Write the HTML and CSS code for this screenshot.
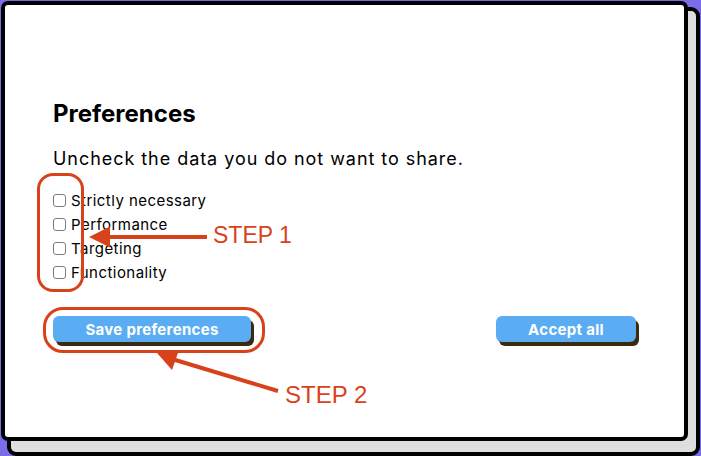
FILE: index.html
```html
<!DOCTYPE html>
<html>
<head>
<meta charset="utf-8">
<link rel="stylesheet" href="styles.css">
</head>
<body>
<div class="backdrop"></div>
<div class="card">
  <h1 class="title">Preferences</h1>
  <p class="lead">Uncheck the data you do not want to share.</p>
  <div class="options">
    <label class="option"><input type="checkbox" class="box"><span>Strictly necessary</span></label>
    <label class="option"><input type="checkbox" class="box"><span>Performance</span></label>
    <label class="option"><input type="checkbox" class="box"><span>Targeting</span></label>
    <label class="option"><input type="checkbox" class="box"><span>Functionality</span></label>
  </div>
  <div class="actions">
    <button class="btn btn-save">Save preferences</button>
    <button class="btn btn-accept">Accept all</button>
  </div>
</div>
<div class="ring ring-1"></div>
<div class="ring ring-2"></div>
<svg class="arrows" width="701" height="456" viewBox="0 0 701 456">
  <line x1="207" y1="237" x2="104" y2="237" stroke="#d8421b" stroke-width="4"/>
  <polygon points="89,237 110,226.5 110,247.5" fill="#d8421b"/>
  <line x1="278" y1="391" x2="172" y2="359" stroke="#d8421b" stroke-width="4"/>
  <polygon points="157,353 179,350 172,370" fill="#d8421b"/>
</svg>
<span class="step step-1">STEP 1</span>
<span class="step step-2">STEP 2</span>
</body>
</html>
```
FILE: styles.css
```css
html, body {
  margin: 0;
  padding: 0;
}
body {
  width: 701px;
  height: 456px;
  overflow: hidden;
  position: relative;
  background: #7b6cea;
  font-family: Inter, "Noto Sans", sans-serif;
  color: #000;
}
.backdrop {
  position: absolute;
  left: 7px;
  top: 7px;
  width: 693px;
  height: 449px;
  box-sizing: border-box;
  border: 4px solid #000;
  border-radius: 9px;
  background: #dedede;
}
.card {
  position: relative;
  margin: 1px 0 0 1px;
  width: 687px;
  height: 440px;
  box-sizing: border-box;
  border: 4px solid #000;
  border-radius: 7px;
  background: #fff;
  padding: 94px 48px 0 48px;
  display: flex;
  flex-direction: column;
}
.title {
  margin: 0;
  font-size: 24px;
  line-height: 30px;
  font-weight: 700;
}
.lead {
  margin: 19px 0 0 0;
  font-size: 18px;
  line-height: 22px;
  letter-spacing: 0.95px;
}
.options {
  margin-top: 19px;
  display: flex;
  flex-direction: column;
}
.option {
  display: flex;
  align-items: center;
  height: 24px;
  font-size: 15px;
  line-height: 24px;
  letter-spacing: 0.45px;
  gap: 5px;
}
.box {
  appearance: none;
  -webkit-appearance: none;
  margin: 0;
  width: 13px;
  height: 13px;
  box-sizing: border-box;
  border: 1px solid #7d7d7d;
  border-radius: 3px;
  background: #fff;
  position: relative;
  top: -1px;
}
.actions {
  margin-top: 31px;
  display: flex;
  justify-content: space-between;
  align-items: flex-start;
}
.btn {
  border: none;
  height: 26px;
  padding: 0;
  border-radius: 6px;
  background: #5aacf3;
  color: #fff;
  font-family: Inter, "Noto Sans", sans-serif;
  font-size: 15px;
  font-weight: 700;
  letter-spacing: 0.3px;
  box-shadow: 3px 4px 0 #3a2a10;
}
.btn-save {
  width: 198px;
}
.btn-accept {
  width: 140px;
}
.ring {
  position: absolute;
  box-sizing: border-box;
  border: 3px solid #d8421b;
}
.ring-1 {
  left: 37px;
  top: 173px;
  width: 47px;
  height: 119px;
  border-radius: 16px;
}
.ring-2 {
  left: 43px;
  top: 307px;
  width: 222px;
  height: 46px;
  border-radius: 20px;
}
.arrows {
  position: absolute;
  left: 0;
  top: 0;
}
.step {
  position: absolute;
  font-family: "Liberation Sans", Arial, sans-serif;
  font-size: 23px;
  line-height: 26px;
  color: #d8421b;
}
.step-1 {
  left: 213px;
  top: 222px;
}
.step-2 {
  left: 285px;
  top: 382px;
  font-size: 24px;
}
```
